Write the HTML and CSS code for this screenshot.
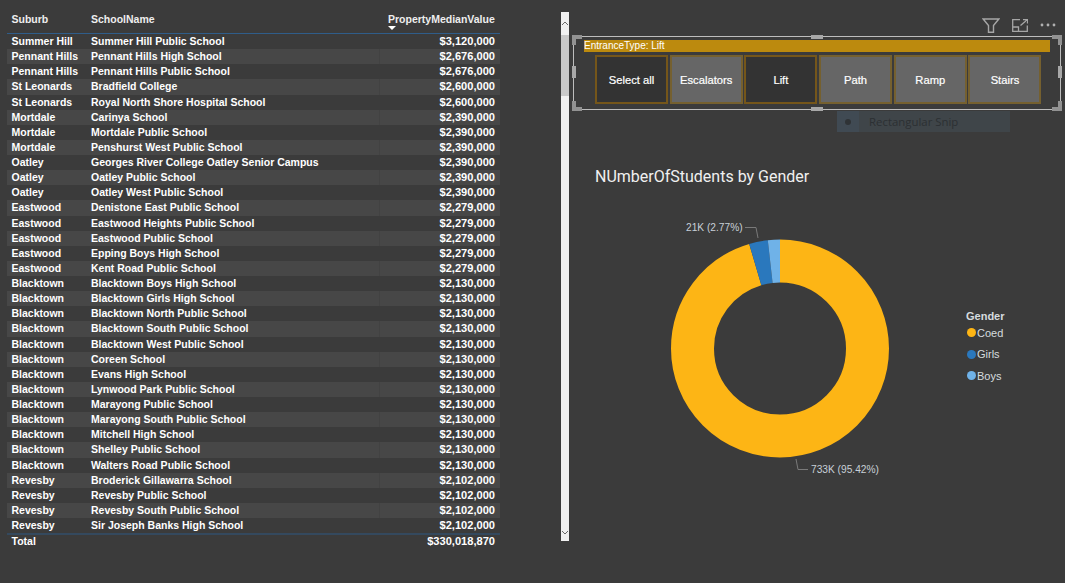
FILE: index.html
```html
<!DOCTYPE html>
<html lang="en">
<head>
<meta charset="utf-8">
<title>School property report</title>
<link rel="stylesheet" href="styles.css">
</head>
<body>
<main class="page">
  <section class="matrix">
    <div class="row head">
      <span>Suburb</span><span>SchoolName</span>
      <span class="sort-cell">PropertyMedianValue<i class="sort-arrow"></i></span>
    </div>
    <div class="row"><span>Summer Hill</span><span>Summer Hill Public School</span><span class="val">$3,120,000</span></div>
    <div class="row"><span>Pennant Hills</span><span>Pennant Hills High School</span><span class="val">$2,676,000</span></div>
    <div class="row"><span>Pennant Hills</span><span>Pennant Hills Public School</span><span class="val">$2,676,000</span></div>
    <div class="row"><span>St Leonards</span><span>Bradfield College</span><span class="val">$2,600,000</span></div>
    <div class="row"><span>St Leonards</span><span>Royal North Shore Hospital School</span><span class="val">$2,600,000</span></div>
    <div class="row"><span>Mortdale</span><span>Carinya School</span><span class="val">$2,390,000</span></div>
    <div class="row"><span>Mortdale</span><span>Mortdale Public School</span><span class="val">$2,390,000</span></div>
    <div class="row"><span>Mortdale</span><span>Penshurst West Public School</span><span class="val">$2,390,000</span></div>
    <div class="row"><span>Oatley</span><span>Georges River College Oatley Senior Campus</span><span class="val">$2,390,000</span></div>
    <div class="row"><span>Oatley</span><span>Oatley Public School</span><span class="val">$2,390,000</span></div>
    <div class="row"><span>Oatley</span><span>Oatley West Public School</span><span class="val">$2,390,000</span></div>
    <div class="row"><span>Eastwood</span><span>Denistone East Public School</span><span class="val">$2,279,000</span></div>
    <div class="row"><span>Eastwood</span><span>Eastwood Heights Public School</span><span class="val">$2,279,000</span></div>
    <div class="row"><span>Eastwood</span><span>Eastwood Public School</span><span class="val">$2,279,000</span></div>
    <div class="row"><span>Eastwood</span><span>Epping Boys High School</span><span class="val">$2,279,000</span></div>
    <div class="row"><span>Eastwood</span><span>Kent Road Public School</span><span class="val">$2,279,000</span></div>
    <div class="row"><span>Blacktown</span><span>Blacktown Boys High School</span><span class="val">$2,130,000</span></div>
    <div class="row"><span>Blacktown</span><span>Blacktown Girls High School</span><span class="val">$2,130,000</span></div>
    <div class="row"><span>Blacktown</span><span>Blacktown North Public School</span><span class="val">$2,130,000</span></div>
    <div class="row"><span>Blacktown</span><span>Blacktown South Public School</span><span class="val">$2,130,000</span></div>
    <div class="row"><span>Blacktown</span><span>Blacktown West Public School</span><span class="val">$2,130,000</span></div>
    <div class="row"><span>Blacktown</span><span>Coreen School</span><span class="val">$2,130,000</span></div>
    <div class="row"><span>Blacktown</span><span>Evans High School</span><span class="val">$2,130,000</span></div>
    <div class="row"><span>Blacktown</span><span>Lynwood Park Public School</span><span class="val">$2,130,000</span></div>
    <div class="row"><span>Blacktown</span><span>Marayong Public School</span><span class="val">$2,130,000</span></div>
    <div class="row"><span>Blacktown</span><span>Marayong South Public School</span><span class="val">$2,130,000</span></div>
    <div class="row"><span>Blacktown</span><span>Mitchell High School</span><span class="val">$2,130,000</span></div>
    <div class="row"><span>Blacktown</span><span>Shelley Public School</span><span class="val">$2,130,000</span></div>
    <div class="row"><span>Blacktown</span><span>Walters Road Public School</span><span class="val">$2,130,000</span></div>
    <div class="row"><span>Revesby</span><span>Broderick Gillawarra School</span><span class="val">$2,102,000</span></div>
    <div class="row"><span>Revesby</span><span>Revesby Public School</span><span class="val">$2,102,000</span></div>
    <div class="row"><span>Revesby</span><span>Revesby South Public School</span><span class="val">$2,102,000</span></div>
    <div class="row"><span>Revesby</span><span>Sir Joseph Banks High School</span><span class="val">$2,102,000</span></div>
    <div class="row total"><span>Total</span><span></span><span class="val">$330,018,870</span></div>
  </section>

  <div class="scrollbar">
    <svg class="scroll-arrow" viewBox="0 0 8 6" width="8" height="6"><path d="M1 5 L4 2 L7 5" fill="none" stroke="#6a6a6a" stroke-width="1"/></svg>
    <div class="scroll-thumb"></div>
    <svg class="scroll-arrow end" viewBox="0 0 8 6" width="8" height="6"><path d="M1 1 L4 4 L7 1" fill="none" stroke="#6a6a6a" stroke-width="1"/></svg>
  </div>

  <section class="right">
    <div class="toolbar">
      <svg class="tool" width="18" height="15" viewBox="0 0 18 15"><path d="M1.2 1 H16.8 L11.5 7.5 V14.2 H6.5 V7.5 Z" fill="none" stroke="#a6a6a6" stroke-width="1.4"/></svg>
      <svg class="tool" width="16" height="13" viewBox="0 0 16 13"><path d="M8 .7 H.7 V12.3 H15.3 V6.5 M.7 8 H6.5 V12.3 M8.5 6.5 L15 1 M11 .7 H15.5 V4.5" fill="none" stroke="#a6a6a6" stroke-width="1.3"/></svg>
      <svg class="tool" width="16" height="4" viewBox="0 0 16 4"><circle cx="2" cy="2" r="1.4" fill="#b0b0b0"/><circle cx="8" cy="2" r="1.4" fill="#b0b0b0"/><circle cx="14" cy="2" r="1.4" fill="#b0b0b0"/></svg>
    </div>

    <div class="slicer">
      <i class="corner tl"></i><i class="corner tr"></i><i class="corner bl"></i><i class="corner br"></i>
      <i class="grip top"></i><i class="grip bottom"></i><i class="grip left"></i><i class="grip right"></i>
      <div class="slicer-title">EntranceType: Lift</div>
      <div class="slicer-buttons">
        <div class="btn on">Select all</div>
        <div class="btn">Escalators</div>
        <div class="btn on">Lift</div>
        <div class="btn">Path</div>
        <div class="btn">Ramp</div>
        <div class="btn">Stairs</div>
      </div>
      <div class="snip"><span class="snip-icon"><i></i></span><span class="snip-text">Rectangular Snip</span></div>
    </div>

    <h2 class="chart-title">NUmberOfStudents by Gender</h2>

    <div class="chart">
      <svg class="donut" width="387" height="280" viewBox="573 203 387 280">
        <g fill="none" stroke-width="43" transform="rotate(-90 780 348.5)">
          <circle cx="780" cy="348.5" r="87.5" pathLength="100" stroke="#fdb515" stroke-dasharray="95.42 4.58"/>
          <circle cx="780" cy="348.5" r="87.5" pathLength="100" stroke="#2a78bd" stroke-dasharray="2.77 97.23" stroke-dashoffset="-95.42"/>
          <circle cx="780" cy="348.5" r="87.5" pathLength="100" stroke="#6fb2e8" stroke-dasharray="1.81 98.19" stroke-dashoffset="-98.19"/>
        </g>
        <path d="M745 227.5 H756 L758 238" fill="none" stroke="#7a7a7a"/>
        <path d="M796 459 L798 469.5 H808" fill="none" stroke="#7a7a7a"/>
        <text class="data-label" x="686" y="231">21K (2.77%)</text>
        <text class="data-label" x="811" y="473">733K (95.42%)</text>
      </svg>
      <div class="legend">
        <div class="legend-title">Gender</div>
        <div class="legend-item"><i class="swatch coed"></i>Coed</div>
        <div class="legend-item"><i class="swatch girls"></i>Girls</div>
        <div class="legend-item"><i class="swatch boys"></i>Boys</div>
      </div>
    </div>
  </section>
</main>
</body>
</html>
```
FILE: styles.css
```css
* { box-sizing: border-box; }
html, body { margin: 0; height: 100%; }
body { background: #3b3b3b; overflow: hidden; }
.page { display: flex; align-items: flex-start; width: 1065px; height: 583px; font-family: "Liberation Sans", Arial, sans-serif; }

/* table */
.matrix { width: 493px; margin-left: 7px; padding-top: 12px; color: #fff; font-size: 10.5px; font-weight: 700; }
.row { display: grid; grid-template-columns: 84px 288px 121px; height: 15.13px; line-height: 15px; white-space: nowrap; }
.row > span:first-child { padding-left: 4.5px; }
.row:nth-child(odd):not(.total) { background: #474747; }
.row:nth-child(odd):not(.total) .val { box-shadow: inset 1px 0 0 #424242; }
.val { text-align: right; padding-right: 5px; font-size: 11.1px; }
.head { height: 22.03px; border-bottom: 1px solid #2f5d8a; color: #eee; line-height: 14px; background: none !important; }
.head > span { align-self: start; }
.sort-cell { position: relative; padding-left: 9px; }
.sort-arrow { display: block; width: 0; height: 0; border-left: 4.5px solid transparent; border-right: 4.5px solid transparent; border-top: 4px solid #fff; }
.total { height: 16px; border-top: 2px solid #34495e; line-height: 12px; }

/* scrollbar */
.scrollbar { display: flex; flex-direction: column; width: 8px; height: 529px; margin: 12px 0 0 61px; background: #f1f1f1; }
.scroll-arrow { display: block; margin-top: 8px; flex: none; }
.scroll-arrow.end { margin: auto 0 5px; }
.scroll-thumb { height: 61px; margin-top: 9px; background: #c9c9c9; }

/* right pane */
.right { width: 492px; margin-left: 4px; }
.toolbar { display: flex; align-items: center; justify-content: flex-end; gap: 12px; height: 24px; margin-top: 12px; padding: 2px 9px 0 0; }
.tool { display: block; flex: none; }

.slicer { position: relative; width: 488px; height: 74px; border: 1px solid #bdbdbd; padding: 3px 10px 0 10px; }
.slicer-title { height: 12px; background: #bc8a0e; color: #fff; font-size: 10px; line-height: 12px; }
.slicer-buttons { display: grid; grid-template-columns: repeat(6, 73px); column-gap: 1.7px; margin: 3px 0 0 11px; }
.btn { display: flex; align-items: center; justify-content: center; height: 49px; border: 2px solid #75602f; background: #666; color: #fff; font-size: 11.2px; -webkit-text-stroke: 0.2px #fff; }
.btn.on { background: #333; border-color: #75561a; }

.corner { position: absolute; width: 10px; height: 10px; border: 0 solid #929292; }
.corner.tl { left: -2px; top: -2px; border-width: 4px 0 0 4px; }
.corner.tr { right: -2px; top: -2px; border-width: 4px 4px 0 0; }
.corner.bl { left: -2px; bottom: -2px; border-width: 0 0 4px 4px; }
.corner.br { right: -2px; bottom: -2px; border-width: 0 4px 4px 0; }
.grip { position: absolute; background: #a8a8a8; }
.grip.top, .grip.bottom { left: 237px; width: 12px; height: 4px; }
.grip.top { top: -2px; }
.grip.bottom { bottom: -2px; }
.grip.left, .grip.right { top: 29px; width: 4px; height: 12px; }
.grip.left { left: -2px; }
.grip.right { right: -2px; }

.snip { position: absolute; left: 263px; top: 74px; display: flex; width: 173px; height: 21px; background: #3f4549; color: #2c3033; font-family: "Open Sans", sans-serif; font-size: 11.4px; line-height: 21px; }
.snip-icon { display: flex; align-items: center; justify-content: center; width: 22px; background: #404a53; }
.snip-icon i { width: 6px; height: 6px; border-radius: 50%; background: #2f3336; }
.snip-text { margin-left: 10px; }

.chart-title { margin: 57px 0 0 22px; height: 20px; color: #f0f0f0; font-family: Roboto, sans-serif; font-size: 16px; font-weight: 400; line-height: 20px; }
.chart { display: flex; align-items: flex-start; margin-top: 16px; }
.donut { display: block; flex: none; }
.data-label { fill: #c8d0d8; font-size: 10.2px; font-family: "Liberation Sans", Arial, sans-serif; }
.legend { margin: 106px 0 0 6px; color: #d6dbdf; font-size: 11px; }
.legend-title { font-weight: 700; line-height: 14px; height: 13px; }
.legend-item { display: flex; align-items: center; gap: 1px; height: 21.5px; line-height: 14px; }
.swatch { display: block; width: 9px; height: 9px; margin-left: 1px; border-radius: 50%; }
.coed { background: #fdb515; }
.girls { background: #2a78bd; }
.boys { background: #6fb2e8; }
```
